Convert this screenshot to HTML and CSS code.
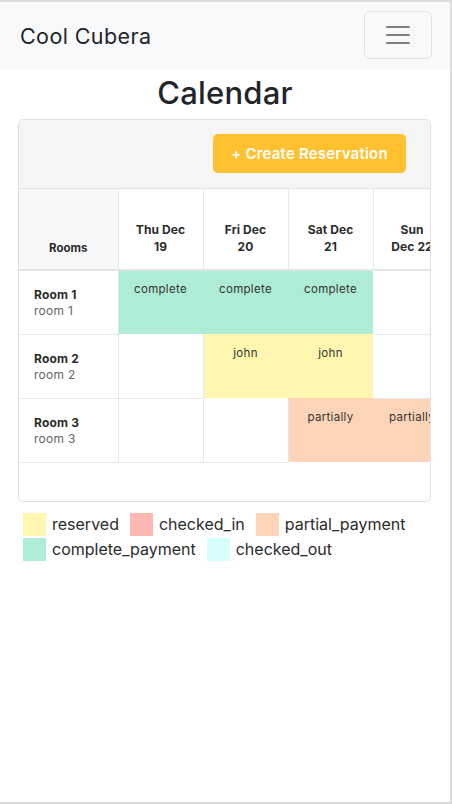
FILE: index.html
```html
<!DOCTYPE html>
<html>
<head>
<meta charset="utf-8">
<link rel="stylesheet" href="styles.css">
</head>
<body>
<div class="frame">
  <nav class="navbar">
    <span class="brand">Cool Cubera</span>
    <button class="toggler" aria-label="menu">
      <svg width="30" height="30" viewBox="0 0 30 30"><path d="M4 7h22M4 15h22M4 23h22" stroke="#7f7f7f" stroke-width="2" stroke-linecap="round"/></svg>
    </button>
  </nav>
  <h1 class="title">Calendar</h1>
  <div class="card">
    <div class="card-header">
      <button class="btn-create">+ Create Reservation</button>
    </div>
    <div class="scroller">
      <table class="cal">
        <thead>
          <tr>
            <th class="rooms-h">Rooms</th>
            <th class="day"><span>Thu Dec</span><span>19</span></th>
            <th class="day"><span>Fri Dec</span><span>20</span></th>
            <th class="day"><span>Sat Dec</span><span>21</span></th>
            <th class="day last"><span>Sun</span><span>Dec 22</span></th>
          </tr>
        </thead>
        <tbody>
          <tr>
            <td class="room"><b>Room 1</b><span>room 1</span></td>
            <td class="res complete">complete</td>
            <td class="res complete">complete</td>
            <td class="res complete">complete</td>
            <td></td>
          </tr>
          <tr>
            <td class="room"><b>Room 2</b><span>room 2</span></td>
            <td></td>
            <td class="res reserved">john</td>
            <td class="res reserved">john</td>
            <td></td>
          </tr>
          <tr>
            <td class="room"><b>Room 3</b><span>room 3</span></td>
            <td></td>
            <td></td>
            <td class="res partial">partially</td>
            <td class="res partial">partially</td>
          </tr>
        </tbody>
      </table>
    </div>
  </div>
  <div class="legend">
    <span class="item"><i class="sw reserved"></i>reserved</span>
    <span class="item"><i class="sw checkedin"></i>checked_in</span>
    <span class="item"><i class="sw partial"></i>partial_payment</span>
    <span class="item"><i class="sw complete"></i>complete_payment</span>
    <span class="item"><i class="sw checkedout"></i>checked_out</span>
  </div>
</div>
</body>
</html>
```
FILE: styles.css
```css
* { box-sizing: border-box; }
html, body { margin: 0; padding: 0; background: #fff; }
body {
  font-family: Inter, "Liberation Sans", sans-serif;
  color: #212529;
}
.frame {
  width: 452px;
  height: 804px;
  border-top: 2px solid #dcdcdc;
  border-right: 2px solid #dcdcdc;
  border-bottom: 2px solid #dcdcdc;
  overflow: hidden;
}
.navbar {
  height: 67px;
  background: #f8f9fa;
  display: flex;
  align-items: center;
  justify-content: space-between;
  padding: 0 18px 0 20px;
}
.brand { font-size: 21.5px; color: #212529; letter-spacing: 0.4px; }
.toggler {
  width: 68px;
  height: 48px;
  margin-top: -1px;
  border: 1px solid #dfe0e1;
  border-radius: 6px;
  background: transparent;
  display: flex;
  align-items: center;
  justify-content: center;
  padding: 0;
}
.title {
  margin: 4px 0 0;
  text-align: center;
  font-size: 31px;
  font-weight: 500;
  line-height: 40px;
  letter-spacing: 0.2px;
}
.card {
  margin: 6px 19px 0 18px;
  border: 1px solid #dfdfdf;
  border-radius: 5px;
  overflow: hidden;
}
.card-header {
  height: 69px;
  background: #f5f5f6;
  border-bottom: 1px solid #e2e3e5;
  display: flex;
  align-items: center;
  justify-content: flex-end;
  padding-right: 24px;
}
.btn-create {
  height: 39px;
  width: 193px;
  background: #ffc12f;
  border: none;
  border-radius: 5px;
  color: #fff;
  font-family: Inter, "Liberation Sans", sans-serif;
  font-size: 15px;
  font-weight: 600;
  letter-spacing: 0.2px;
  margin-top: -1px;
}
.scroller {
  overflow: hidden;
  padding-bottom: 38px;
}
.cal {
  border-collapse: collapse;
  table-layout: fixed;
  width: 432px;
}
.cal th, .cal td {
  border: 1px solid #e6e7e9;
  padding: 0;
}
.cal thead th {
  height: 81px;
  border-top: none;
  border-bottom: 2px solid #e4e5e7;
  font-size: 12px;
  font-weight: 700;
  color: #2b2b2b;
  vertical-align: bottom;
  padding-bottom: 14px;
}
.cal th:first-child, .cal td:first-child { border-left: none; }
.rooms-h {
  width: 99px;
  background: #f7f8f9;
  font-size: 11.5px !important;
  padding-bottom: 14px !important;
}
.day { width: 85px; }
.day.last { width: 78px; }
.day span { display: block; line-height: 17px; letter-spacing: 0.1px; white-space: nowrap; }
.cal tbody td { height: 64px; vertical-align: top; }
.room {
  padding: 16px 0 0 15px !important;
  font-size: 12px;
  line-height: 16px;
}
.room b { display: block; color: #2b2b2b; font-weight: 700; letter-spacing: 0.2px; }
.room span { display: block; color: #666; letter-spacing: 0.3px; }
.res {
  text-align: center;
  font-size: 11.5px;
  color: #333;
  padding-top: 11px !important;
  letter-spacing: 0.3px;
  white-space: nowrap;
}
.complete { background: #afecd5; }
.reserved { background: #fff6b0; }
.partial { background: #fed4b9; }
.checkedin { background: #feb8b1; }
.checkedout { background: #d6fefd; }
.res.complete, .res.reserved, .res.partial { border-color: transparent; }
.legend {
  margin: 11px 0 0 23px;
  width: 400px;
  display: flex;
  flex-wrap: wrap;
  row-gap: 2px;
  font-size: 16px;
  line-height: 23px;
  color: #2b2b2b;
}
.item { display: flex; align-items: center; margin-right: 11px; letter-spacing: 0; }
.sw {
  display: block;
  width: 23px;
  height: 23px;
  margin-right: 6px;
}
```
